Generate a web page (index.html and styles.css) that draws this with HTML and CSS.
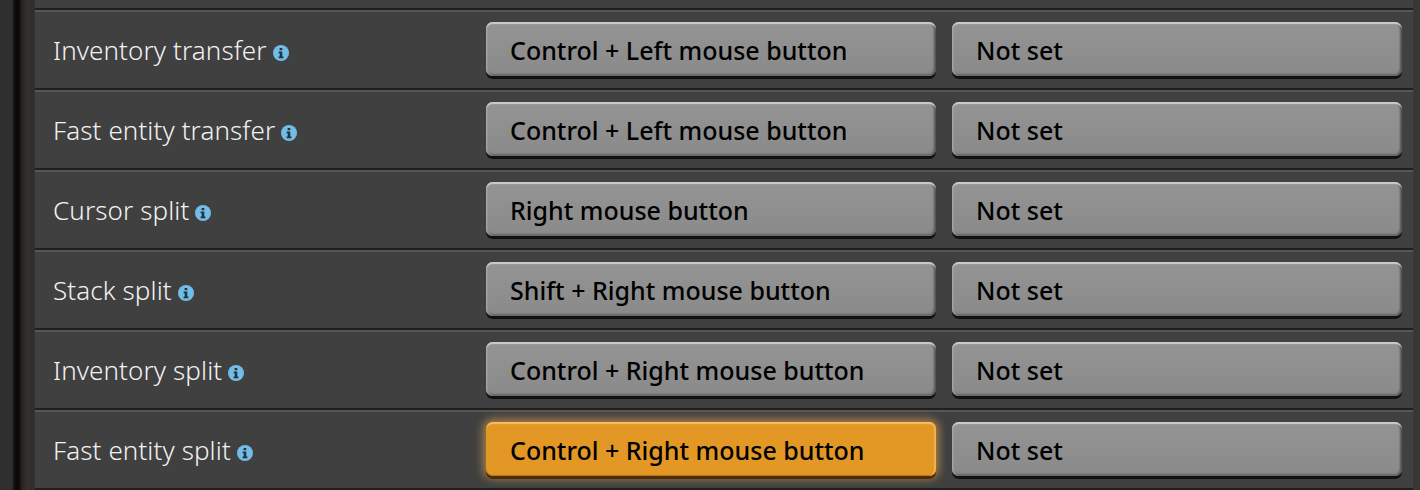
FILE: index.html
```html
<!DOCTYPE html>
<html lang="en">
<head>
<meta charset="utf-8">
<title>Controls</title>
<link rel="stylesheet" href="styles.css">
</head>
<body>
<svg class="defs" width="0" height="0" aria-hidden="true"><symbol id="info" viewBox="0 0 16 16"><circle cx="8" cy="8" r="8" fill="#72bde6"/><path fill="#24343c" d="M6.6 2.9h2.7v2.3H6.6zM5.6 6.5h3.7v5h1.1v1.7H5.6v-1.7h1.1V8.2H5.6z"/></symbol></svg>
<div class="shell">
<div class="gutter"></div>
<main class="list">
<div class="stub"></div>
<div class="row"><div class="label">Inventory transfer<svg class="info"><use href="#info"/></svg></div><button class="key">Control + Left mouse button</button><button class="key">Not set</button></div>
<div class="row"><div class="label">Fast entity transfer<svg class="info"><use href="#info"/></svg></div><button class="key">Control + Left mouse button</button><button class="key">Not set</button></div>
<div class="row"><div class="label">Cursor split<svg class="info"><use href="#info"/></svg></div><button class="key">Right mouse button</button><button class="key">Not set</button></div>
<div class="row"><div class="label">Stack split<svg class="info"><use href="#info"/></svg></div><button class="key">Shift + Right mouse button</button><button class="key">Not set</button></div>
<div class="row"><div class="label">Inventory split<svg class="info"><use href="#info"/></svg></div><button class="key">Control + Right mouse button</button><button class="key">Not set</button></div>
<div class="row"><div class="label">Fast entity split<svg class="info"><use href="#info"/></svg></div><button class="key active">Control + Right mouse button</button><button class="key">Not set</button></div>
</main>
<div class="edge"></div>
</div>
</body>
</html>
```
FILE: styles.css
```css
* { box-sizing: border-box; }
html, body { margin: 0; height: 490px; overflow: hidden; background: #2f2e2d; }
.defs { position: absolute; }
.shell { display: flex; height: 490px; }
.gutter {
  width: 35px; flex: none;
  background: linear-gradient(90deg, #2f2f2f 0 12px, #141210 14px, #080605 18px, #2c2826 23px, #38322f 29px, #2e2c2b 31px, #333 35px);
}
.edge { width: 7px; flex: none; background: #383736; }
.list { flex: 1; display: flex; flex-direction: column; }
.stub { height: 10px; flex: none; background: #404040; border-bottom: 2px solid #1f1f1f; }
.row {
  height: 80px; flex: none;
  display: grid;
  grid-template-columns: 417px 450px 450px;
  column-gap: 16px;
  padding: 10px 10px 0 18px;
  align-items: start;
  background: #404040;
  border-top: 2px solid #565656;
  border-bottom: 2px solid #1f1f1f;
}
.label {
  display: flex; align-items: center; gap: 6px;
  height: 56px;
  color: #f2f2f2;
  font: 300 26px/1 "Noto Sans", sans-serif;
  letter-spacing: .1px;
  white-space: nowrap;
}
.info { width: 16px; height: 16px; flex: none; margin-top: 5px; }
.key {
  height: 54px; padding: 3px 0 0 24px; margin: 0;
  text-align: left;
  color: #000;
  font: 500 25px/1 "Noto Sans", sans-serif;
  background: linear-gradient(#949494, #8a8a8a);
  border: 0; border-radius: 7px;
  box-shadow: inset 0 3px 1px -1px #cdcdcd, inset 3px 0 2px -2px #b0b0b0, inset -4px 0 2px -2px #555, inset 0 -3px 2px -1px #666, 0 3px 0 #111;
}
.key.active {
  background: #e39826;
  box-shadow: inset 0 3px 1px -1px #f6bd62, inset -3px 0 1px -1px #f4b14a, inset 0 -2px 1px -1px #b8741a, 0 3px 0 #4c2c06, 0 0 8px 3px rgba(233,170,80,.6);
}
```
